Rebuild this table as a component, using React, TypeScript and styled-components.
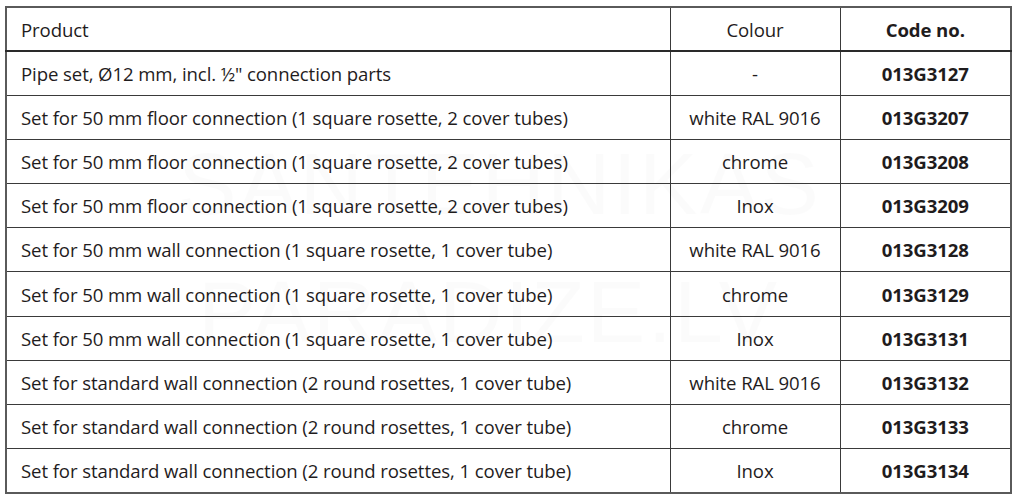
import React from "react";
import styled, { createGlobalStyle } from "styled-components";

const Global = createGlobalStyle`
  html, body { margin: 0; padding: 0; background: #fff; }
  body { font-family: "Open Sans", "Liberation Sans", sans-serif; color: #1f1c1d; }
`;

const Page = styled.div`
  position: relative;
  padding: 6px 8px 0 5px;
  width: 1018px;
  box-sizing: border-box;
  overflow: hidden;
`;

const Table = styled.table`
  width: 1005px;
  border-collapse: collapse;
  border: 2px solid #5a5a5a;
  table-layout: fixed;
  font-size: 18.6px;
`;

const Row = styled.tr<{ $head?: boolean }>`
  height: ${(p) => (p.$head ? 44 : 44.2)}px;
  border-bottom: ${(p) => (p.$head ? "2.5px solid #2a2a2a" : "1.5px solid #3a3a3a")};
`;

const Cell = styled.td<{ $align?: "left" | "center"; $bold?: boolean }>`
  padding: 0 0 0 ${(p) => (p.$align === "center" ? 0 : 14)}px;
  text-align: ${(p) => p.$align ?? "left"};
  font-weight: ${(p) => (p.$bold ? 700 : 400)};
  border-right: 1.5px solid #3a3a3a;
  white-space: nowrap;
  vertical-align: middle;
  letter-spacing: -0.1px;
`;

const Watermark = styled.div<{ $top: number; $left: number }>`
  position: absolute;
  top: ${(p) => p.$top}px;
  left: ${(p) => p.$left}px;
  font-family: "Liberation Sans", sans-serif;
  font-size: 88px;
  font-weight: 400;
  letter-spacing: 2px;
  line-height: 1;
  color: rgba(0, 0, 0, 0.016);
  pointer-events: none;
  white-space: nowrap;
`;

const rows: [string, string, string][] = [
  ['Pipe set, Ø12 mm, incl. ½" connection parts', "-", "013G3127"],
  ["Set for 50 mm floor connection (1 square rosette, 2 cover tubes)", "white RAL 9016", "013G3207"],
  ["Set for 50 mm floor connection (1 square rosette, 2 cover tubes)", "chrome", "013G3208"],
  ["Set for 50 mm floor connection (1 square rosette, 2 cover tubes)", "Inox", "013G3209"],
  ["Set for 50 mm wall connection (1 square rosette, 1 cover tube)", "white RAL 9016", "013G3128"],
  ["Set for 50 mm wall connection (1 square rosette, 1 cover tube)", "chrome", "013G3129"],
  ["Set for 50 mm wall connection (1 square rosette, 1 cover tube)", "Inox", "013G3131"],
  ["Set for standard wall connection (2 round rosettes, 1 cover tube)", "white RAL 9016", "013G3132"],
  ["Set for standard wall connection (2 round rosettes, 1 cover tube)", "chrome", "013G3133"],
  ["Set for standard wall connection (2 round rosettes, 1 cover tube)", "Inox", "013G3134"],
];

export default function App() {
  return (
    <Page>
      <Global />
      <Table>
        <colgroup>
          <col style={{ width: 664 }} />
          <col style={{ width: 170 }} />
          <col style={{ width: 171 }} />
        </colgroup>
        <thead>
          <Row $head>
            <Cell as="th">Product</Cell>
            <Cell as="th" $align="center">Colour</Cell>
            <Cell as="th" $align="center" $bold>Code no.</Cell>
          </Row>
        </thead>
        <tbody>
          {rows.map((r, i) => (
            <Row key={i}>
              <Cell>{r[0]}</Cell>
              <Cell $align="center">{r[1]}</Cell>
              <Cell $align="center" $bold>{r[2]}</Cell>
            </Row>
          ))}
        </tbody>
      </Table>
      <Watermark $top={140} $left={178} aria-hidden>SANTEHNIKAS</Watermark>
      <Watermark $top={268} $left={198} aria-hidden>PARADIZE.LV</Watermark>
    </Page>
  );
}
